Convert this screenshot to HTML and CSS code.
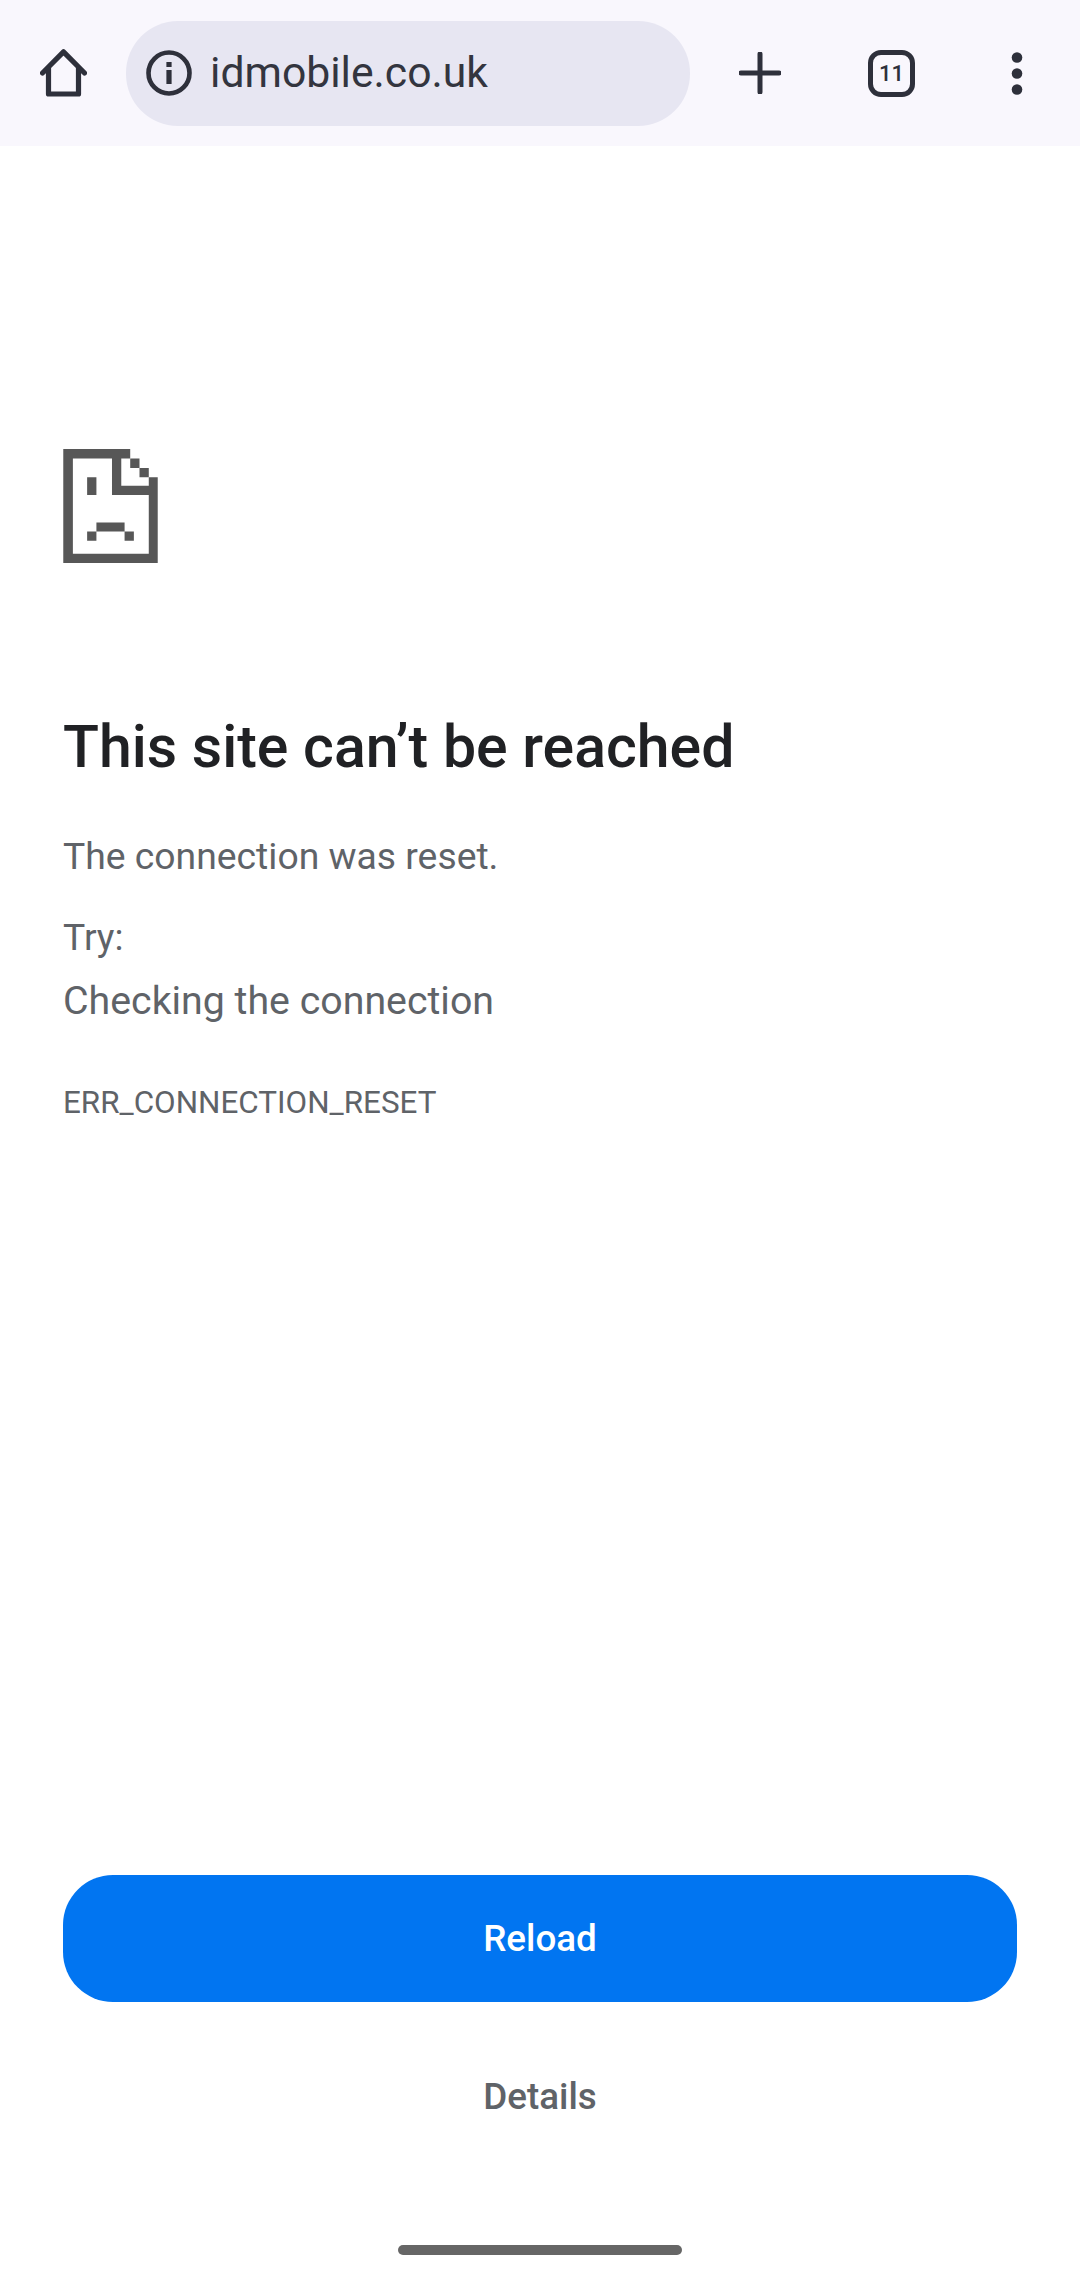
FILE: index.html
```html
<!DOCTYPE html>
<html lang="en">
<head>
<meta charset="utf-8">
<title>idmobile.co.uk</title>
<link rel="stylesheet" href="styles.css">
</head>
<body>
<header class="toolbar">
  <svg class="icon-home" viewBox="0 0 47 48" aria-hidden="true"><path d="M2.5 24 23.5 2.8 44.5 24M8.5 18.5V45H38.5V18.5" fill="none" stroke="#2e303b" stroke-width="5.2" stroke-linecap="round" stroke-linejoin="round"/></svg>
  <div class="omnibox">
    <svg class="icon-info" viewBox="0 0 46 46" aria-hidden="true"><circle cx="23" cy="23" r="20.5" fill="none" stroke="#2e303b" stroke-width="4.6"/><rect x="20.4" y="12" width="5.2" height="5" fill="#2e303b"/><rect x="20.4" y="20" width="5.2" height="14" fill="#2e303b"/></svg>
    <span class="url">idmobile.co.uk</span>
  </div>
  <svg class="icon-plus" viewBox="0 0 42 42" aria-hidden="true"><path d="M21 2V40M2 21H40" fill="none" stroke="#2e303b" stroke-width="5" stroke-linecap="round"/></svg>
  <div class="tabs">11</div>
  <svg class="icon-menu" viewBox="0 0 12 43" aria-hidden="true"><circle cx="6" cy="5.5" r="5.3" fill="#2e303b"/><circle cx="6" cy="21.5" r="5.3" fill="#2e303b"/><circle cx="6" cy="37.5" r="5.3" fill="#2e303b"/></svg>
</header>
<main class="content">
  <svg class="sad-doc" viewBox="68 56 285 344" aria-hidden="true">
    <path fill="#575757" d="M68 56H270V85H243V167H326V141H353V400H68ZM97 85V372H326V195H215V85Z"/>
    <path fill="#575757" d="M270 85H298V113H270ZM298 113H326V141H298ZM140 141H168V195H140ZM168 278H253V305H168ZM140 305H168V333H140ZM253 305H281V333H253Z"/>
  </svg>
  <h1 class="title">This site can’t be reached</h1>
  <p class="reason">The connection was reset.</p>
  <p class="try">Try:</p>
  <p class="suggestion">Checking the connection</p>
  <p class="code">ERR_CONNECTION_RESET</p>
</main>
<footer class="actions">
  <button class="reload" type="button">Reload</button>
  <button class="details" type="button">Details</button>
</footer>
<div class="gesture"><div class="gesture-bar"></div></div>
</body>
</html>
```

FILE: styles.css
```css
* { box-sizing: border-box; }
html, body { margin: 0; padding: 0; }
body {
  width: 1080px;
  height: 2281px;
  background: #fff;
  font-family: Roboto, "Liberation Sans", sans-serif;
  display: flex;
  flex-direction: column;
  overflow: hidden;
}
.toolbar {
  height: 146px;
  background: #f9f7fd;
  display: flex;
  align-items: center;
  padding-left: 40px;
  flex: none;
}
.icon-home { width: 47px; height: 48px; margin-right: 39px; }
.omnibox {
  width: 564px;
  height: 105px;
  background: #e7e6f2;
  border-radius: 52px;
  display: flex;
  align-items: center;
  padding-left: 20px;
  margin-right: 49px;
}
.icon-info { width: 46px; height: 46px; margin-right: 18px; }
.url { font-size: 42.7px; color: #33353f; padding-bottom: 3px; }
.icon-plus { width: 42px; height: 42px; margin-right: 87px; }
.tabs {
  width: 47px;
  height: 47px;
  border: 5px solid #2e303b;
  border-radius: 13px;
  color: #2e303b;
  font-size: 22px;
  font-weight: 500;
  display: flex;
  align-items: center;
  justify-content: center;
  margin-right: 96px;
}
.icon-menu { width: 12px; height: 43px; }
.content { flex: 1; padding: 303px 63px 0; }
.sad-doc { display: block; width: 95px; height: 114px; }
.title { margin: 151px 0 0; font-size: 59px; line-height: 66px; font-weight: 500; color: #202124; }
.reason, .try, .suggestion { margin: 0; line-height: 48px; color: #5f6368; }
.reason { margin-top: 52px; font-size: 37.3px; }
.try { margin-top: 33px; font-size: 37.3px; }
.suggestion { margin-top: 16px; font-size: 39.3px; }
.code { margin: 58px 0 0; font-size: 31.4px; line-height: 40px; color: #5f6368; }
.actions { flex: none; padding: 0 63px; display: flex; flex-direction: column; }
.reload {
  height: 127px;
  border: 0;
  border-radius: 50px;
  background: #0175f1;
  color: #fff;
  font: 500 36.8px Roboto, sans-serif;
}
.details {
  height: 127px;
  margin-top: 31px;
  border: 0;
  background: transparent;
  color: #5f6368;
  font: 500 36.8px Roboto, sans-serif;
}
.gesture { flex: none; height: 121px; display: flex; justify-content: center; padding-top: 85px; }
.gesture-bar { width: 284px; height: 10px; border-radius: 5px; background: #666; }
```
